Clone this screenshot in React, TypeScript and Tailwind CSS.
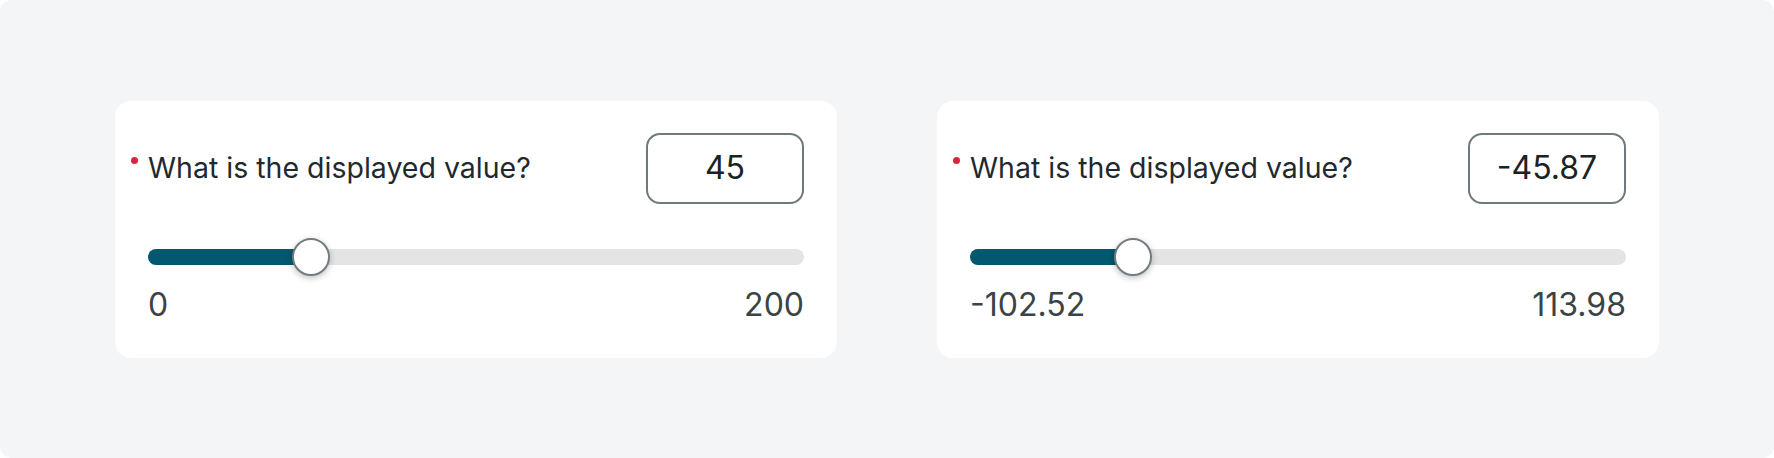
import React from "react";

type SliderCardProps = {
  value: string;
  min: string;
  max: string;
  thumbAt: number;
};

const SliderCard = ({ value, min, max, thumbAt }: SliderCardProps) => {
  return (
    <div className="w-[722px] rounded-2xl bg-white px-[33px] pt-[32px] pb-[33px]">
      <div className="flex items-center justify-between h-[71px]">
        <div className="flex items-start">
          {/* required marker sits just left of the content edge */}
          <span className="mt-[7px] ml-[-17px] mr-[10px] h-[7px] w-[7px] rounded-full bg-[#d7263d]" />
          <span className="text-[28.5px] leading-[36px] text-[#1f292e]">
            What is the displayed value?
          </span>
        </div>
        <div className="flex h-[71px] w-[158px] items-center justify-center rounded-[14px] border-2 border-[#6e7a7c] text-[32px] text-[#1b2224]">
          {value}
        </div>
      </div>

      <div className="relative mt-[34px] h-[38px]">
        <div className="absolute left-0 right-0 top-[11px] h-[16px] rounded-full bg-[#e2e4e5]" />
        <div
          className="absolute left-0 top-[11px] h-[16px] rounded-l-full bg-[#03586f]"
          style={{ width: thumbAt }}
        />
        <div
          className="absolute top-0 h-[38px] w-[38px] rounded-full border-2 border-[#737d80] bg-white shadow-[0_2px_6px_rgba(0,0,0,0.25)]"
          style={{ left: thumbAt - 19 }}
        />
      </div>

      <div className="mt-[9px] flex justify-between text-[32px] leading-[40px] text-[#3a4447]">
        <span>{min}</span>
        <span>{max}</span>
      </div>
    </div>
  );
};

export default function App() {
  return (
    <div
      className="flex h-[458px] w-full items-center justify-center gap-[100px] rounded-xl bg-[#f3f5f6]"
      style={{ fontFamily: "Inter, 'Noto Sans', sans-serif" }}
    >
      <SliderCard value="45" min="0" max="200" thumbAt={163} />
      <SliderCard value="-45.87" min="-102.52" max="113.98" thumbAt={163} />
    </div>
  );
}
